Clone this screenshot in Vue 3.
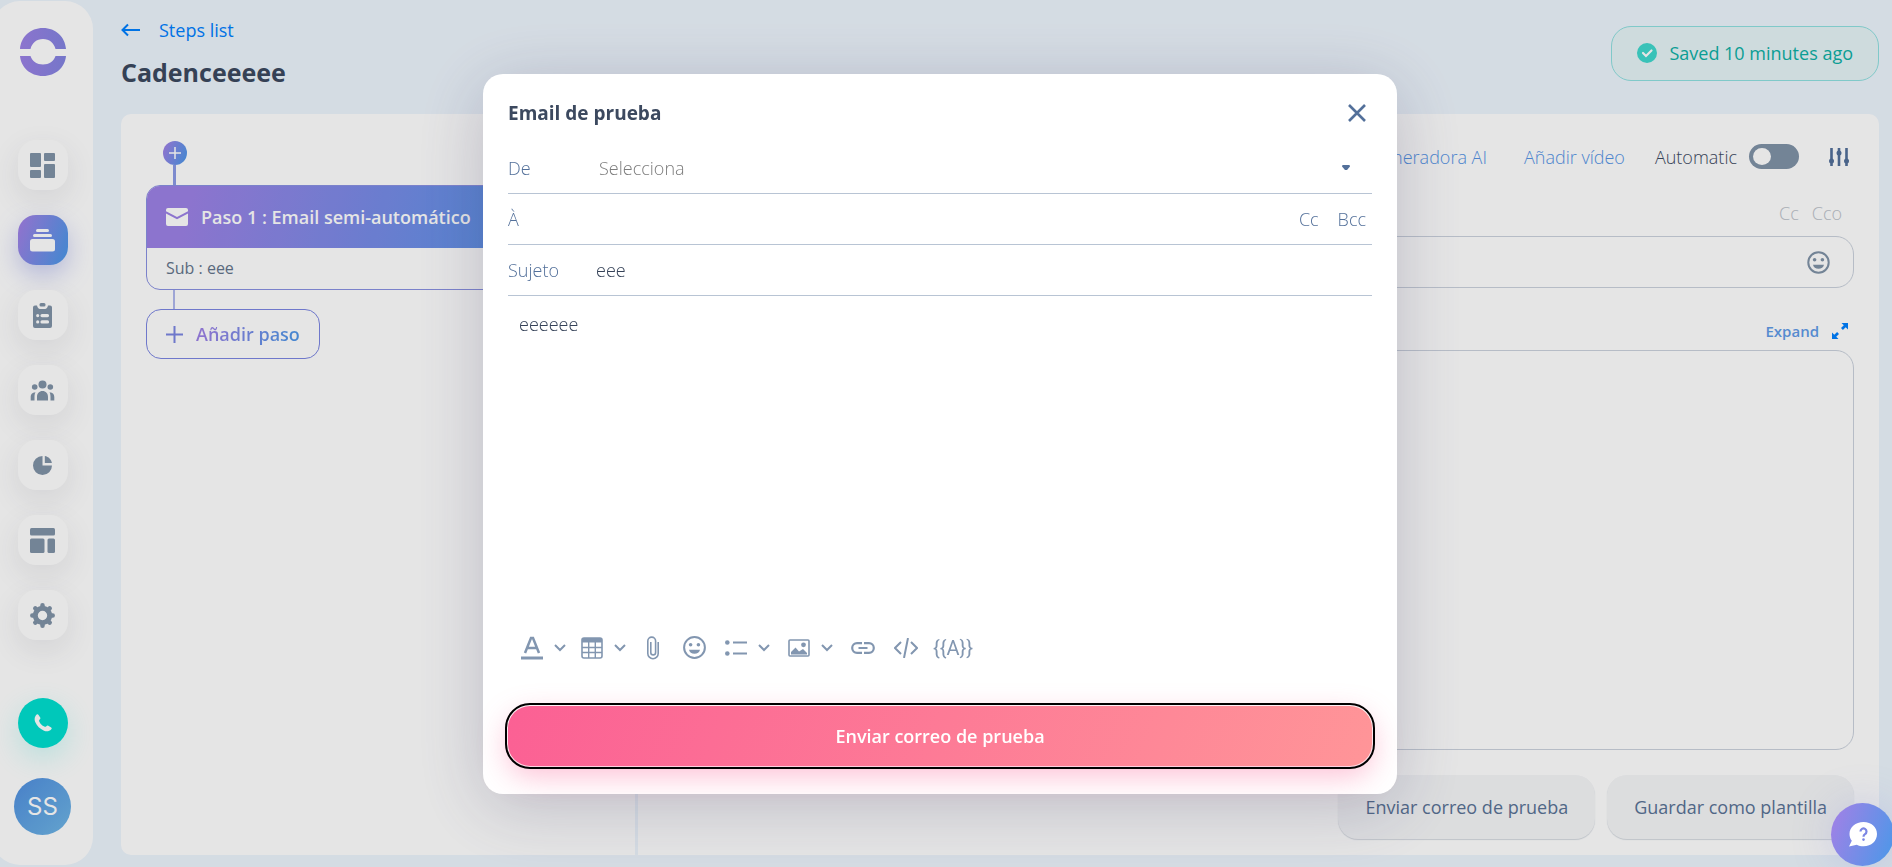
<script setup>
import { ref } from 'vue'

// --- ESTADO ---
const automatico = ref(false)
const remitente = ref('')
const destinatario = ref('')
const asunto = ref('eee')
const mensaje = ref('eeeeee')
const asuntoPaso = ref('')
const cuerpoPaso = ref('')
const mostrarModal = ref(true)
</script>

<template>
  <div class="page">
    <!-- BARRA LATERAL -->
    <aside class="sidebar">
      <svg class="logo" width="46" height="48" viewBox="0 0 46 48">
        <defs>
          <linearGradient id="grad-logo" x1="0" x2="1">
            <stop offset="0" stop-color="#9c82e6" />
            <stop offset="1" stop-color="#8384e0" />
          </linearGradient>
        </defs>
        <path fill="url(#grad-logo)" d="M0 21C1 9 10 0 23 0s22 9 23 21H35.500C34 15 29.500 11 23 11s-11 4-12.500 10zM0 28h10.500C12 33 17 36.500 23 36.500S34 33 35.500 28H46C45 39 36 48 23 48S1 39 0 28z" />
      </svg>

      <nav class="nav">
        <button class="nav-btn" aria-label="Panel">
          <svg width="25" height="25" viewBox="0 0 25 25">
            <rect width="11" height="14" rx="1" /><rect y="17" width="11" height="8" rx="1" />
            <rect x="14" width="11" height="8" rx="1" /><rect x="14" y="11" width="11" height="14" rx="1" />
          </svg>
        </button>
        <button class="nav-btn active" aria-label="Cadencias">
          <svg width="25" height="25" viewBox="0 0 25 25">
            <rect x="6" y="1" width="13" height="3" rx="1.500" /><rect x="3" y="6" width="19" height="3" rx="1.500" />
            <rect y="11" width="25" height="12.500" rx="2.500" />
          </svg>
        </button>
        <button class="nav-btn" aria-label="Tareas">
          <svg width="25" height="25" viewBox="0 0 25 25">
            <path fill-rule="evenodd" d="M5 2.500h2c.5 2 1.500 3.500 3 3.500h5c1.500 0 2.500-1.500 3-3.500h2a2 2 0 0 1 2 2V23a2 2 0 0 1-2 2H5a2 2 0 0 1-2-2V4.500a2 2 0 0 1 2-2zM7.700 11a1.600 1.600 0 1 0 0 3.200 1.600 1.600 0 0 0 0-3.200zm4.300 0a1.600 1.600 0 0 0 0 3.200h5.500a1.600 1.600 0 0 0 0-3.200zm-4.300 6.300a1.600 1.600 0 1 0 0 3.200 1.600 1.600 0 0 0 0-3.200zm4.300 0a1.600 1.600 0 0 0 0 3.200h5.500a1.600 1.600 0 0 0 0-3.200z" />
            <rect x="9.500" y="0" width="6" height="3.600" rx="1.500" />
          </svg>
        </button>
        <button class="nav-btn" aria-label="Contactos">
          <svg width="25" height="25" viewBox="0 0 25 25">
            <circle cx="12.500" cy="6.500" r="4" /><circle cx="4.700" cy="9" r="2.800" /><circle cx="20.300" cy="9" r="2.800" />
            <path d="M7 22.500v-3.500c0-3.500 2.200-6 5.500-6s5.500 2.500 5.500 6v3.500zM.7 22.500V19c0-2.500 1.300-4.600 4.800-4.800C4.700 15.500 4.500 17 4.500 19v3.500zM24.300 22.500V19c0-2.500-1.300-4.600-4.800-4.800.8 1.300 1 2.800 1 4.800v3.500z" />
          </svg>
        </button>
        <button class="nav-btn" aria-label="Informes">
          <svg width="25" height="25" viewBox="0 0 25 25">
            <path d="M12.500 3v9.500H22A9.500 9.500 0 1 1 12.500 3z" /><path d="M14.800 3c3.800.7 6.500 3.400 7.100 7.100h-7.100z" />
          </svg>
        </button>
        <button class="nav-btn" aria-label="Plantillas">
          <svg width="25" height="25" viewBox="0 0 25 25">
            <rect width="25" height="7.500" rx="1.500" /><rect y="10.500" width="14.500" height="14.500" rx="1.500" />
            <rect x="17.500" y="10.500" width="7.500" height="14.500" rx="1.500" />
          </svg>
        </button>
        <button class="nav-btn" aria-label="Ajustes">
          <svg width="25" height="25" viewBox="0 0 25 25">
            <circle cx="12.500" cy="12.500" r="7.200" fill="none" stroke="#8193a8" stroke-width="5" />
            <path fill="none" stroke="#8193a8" stroke-width="4.500" stroke-linecap="round" d="M12.500 2.300v1.500M12.500 21.200v1.500M2.300 12.500h1.500M21.200 12.500h1.500M5.300 5.300l.8.8M18.900 18.900l.8.8M19.700 5.300l-.8.8M6.100 18.900l-.8.8" />
          </svg>
        </button>
      </nav>

      <button class="phone" aria-label="Llamar">
        <svg width="18" height="18" viewBox="0 0 18 18">
          <path fill="#fff" d="M2.700.6c.6-.7 1.300-.5 1.700.1L6.200 3.600c.4.700.2 1.200-.3 1.700-.9.800-1 1.400-.6 2.300 1 2.400 2.700 4.100 5 5 .9.400 1.500.3 2.300-.6.500-.5 1-.7 1.700-.3l2.900 1.800c.7.500.7 1.100.1 1.700-2 2.200-4.600 2.700-7.300 1.500C5.800 14.800 3 12 1.200 8 .1 5.200.6 2.600 2.700.6z" />
        </svg>
      </button>
      <button class="avatar">SS</button>
    </aside>

    <!-- CONTENIDO PRINCIPAL -->
    <main class="main">
      <header class="header">
        <div>
          <a class="back" href="#">
            <svg width="20" height="14" viewBox="0 0 20 14" fill="none" stroke="currentColor" stroke-width="2">
              <path d="M19 7H2M7 1.500L1.500 7 7 12.500" />
            </svg>
            Steps list
          </a>
          <h1>Cadenceeeee</h1>
        </div>
        <div class="saved">
          <svg width="20" height="20" viewBox="0 0 20 20">
            <circle cx="10" cy="10" r="10" fill="#40d8cd" />
            <path d="M6 10l3 3 5.500-5.500" fill="none" stroke="#fff" stroke-width="2.200" stroke-linecap="round" />
          </svg>
          Saved 10 minutes ago
        </div>
      </header>

      <div class="panel">
        <!-- Lista de pasos -->
        <section class="steps">
          <button class="insert" aria-label="Insertar paso">
            <svg width="12" height="12" viewBox="0 0 12 12"><path d="M6 0v12M0 6h12" stroke="#fff" stroke-width="1.500" /></svg>
          </button>
          <div class="line"></div>
          <article class="step">
            <h2>
              <svg width="22" height="18" viewBox="0 0 22 18" fill="#fff">
                <path d="M2 0h18a2 2 0 0 1 2 2v1.300L11 9 0 3.300V2a2 2 0 0 1 2-2z" />
                <path d="M0 5.500l11 5.700 11-5.700V16a2 2 0 0 1-2 2H2a2 2 0 0 1-2-2z" />
              </svg>
              Paso 1 : Email semi-automático
            </h2>
            <p>Sub : eee</p>
          </article>
          <div class="line thin"></div>
          <button class="add-step">
            <svg width="17" height="17" viewBox="0 0 17 17"><path d="M8.500 0v17M0 8.500h17" stroke="#7c86e2" stroke-width="2" /></svg>
            <span>Añadir paso</span>
          </button>
        </section>

        <!-- Editor del paso -->
        <section class="editor">
          <div class="options">
            <a class="ai" href="#">Generadora AI</a>
            <a href="#">Añadir vídeo</a>
            <label class="auto">
              Automatic
              <input v-model="automatico" type="checkbox" />
            </label>
            <button class="plain" aria-label="Opciones">
              <svg width="20" height="18" viewBox="0 0 20 18" fill="#53709a">
                <path d="M1.200 0h2.600v18H1.200zM8.700 0h2.600v18H8.700zM16.200 0h2.600v18h-2.600z" />
                <circle cx="2.500" cy="13" r="2.500" /><circle cx="10" cy="5" r="2.500" /><circle cx="17.500" cy="13" r="2.500" />
              </svg>
            </button>
          </div>
          <div class="copies">
            <button class="plain">Cc</button>
            <button class="plain">Cco</button>
          </div>
          <div class="subject-box">
            <input v-model="asuntoPaso" type="text" aria-label="Asunto" />
            <button class="plain" aria-label="Emoji">
              <svg width="23" height="23" viewBox="0 0 23 23" fill="#8193a8">
                <circle cx="11.500" cy="11.500" r="10.200" fill="none" stroke="#8193a8" stroke-width="2" />
                <circle cx="7.600" cy="8.700" r="1.800" /><circle cx="15.400" cy="8.700" r="1.800" />
                <path d="M6 13.800h11c-.5 2.500-2.600 4-5.500 4s-5-1.500-5.500-4z" />
              </svg>
            </button>
          </div>
          <button class="plain expand">
            Expand
            <svg width="16" height="16" viewBox="0 0 16 16" fill="#0080ff">
              <path d="M9.500 0H16v6.500l-2.300-2.300-2.800 2.800-1.900-1.900 2.800-2.800zM6.500 16H0V9.500l2.300 2.300 2.800-2.800 1.900 1.900-2.800 2.800z" />
            </svg>
          </button>
          <textarea v-model="cuerpoPaso" class="body-box" aria-label="Mensaje del paso"></textarea>
          <div class="actions">
            <button @click="mostrarModal = true">Enviar correo de prueba</button>
            <button>Guardar como plantilla</button>
          </div>
        </section>
      </div>
    </main>

    <!-- MODAL -->
    <div v-if="mostrarModal" class="overlay">
      <form class="modal" @submit.prevent>
        <header class="modal-head">
          <h2>Email de prueba</h2>
          <button type="button" class="plain" aria-label="Cerrar" @click="mostrarModal = false">
            <svg width="18" height="18" viewBox="0 0 18 18"><path d="M1 1l16 16M17 1L1 17" stroke="#53709a" stroke-width="2.600" /></svg>
          </button>
        </header>

        <div class="field">
          <label for="de">De</label>
          <select id="de" v-model="remitente">
            <option value="">Selecciona</option>
          </select>
          <svg class="caret" width="8" height="5" viewBox="0 0 8 5"><path d="M.5 0h7l.5 1.500L5 5H3L0 1.500z" fill="#53709a" /></svg>
        </div>
        <div class="field">
          <label for="para">À</label>
          <input id="para" v-model="destinatario" type="text" />
          <button type="button" class="plain">Cc</button>
          <button type="button" class="plain">Bcc</button>
        </div>
        <div class="field">
          <label for="sujeto">Sujeto</label>
          <input id="sujeto" v-model="asunto" type="text" />
        </div>

        <textarea v-model="mensaje" class="message" aria-label="Mensaje"></textarea>

        <!-- Herramientas de formato -->
        <div class="tools">
          <button type="button" class="plain with-arrow" aria-label="Texto">
            <svg width="22" height="24" viewBox="0 0 22 24">
              <path d="M4 17L10 2h2l6 15M6.500 12h9" fill="none" stroke="currentColor" stroke-width="2.500" />
              <path d="M0 20.500h22v3H0z" />
            </svg>
            <svg width="12" height="8" viewBox="0 0 12 8"><path d="M1 1l5 5 5-5" fill="none" stroke="currentColor" stroke-width="2" /></svg>
          </button>
          <button type="button" class="plain with-arrow" aria-label="Tabla">
            <svg width="22" height="22" viewBox="0 0 22 22">
              <rect x="1" y="1" width="20" height="20" rx="2" fill="none" stroke="currentColor" stroke-width="1.600" />
              <path d="M1 1h20v4.500H1z" />
              <path d="M1 10.500h20M1 15.500h20M7.700 5v16M14.300 5v16" stroke="currentColor" stroke-width="1.400" />
            </svg>
            <svg width="12" height="8" viewBox="0 0 12 8"><path d="M1 1l5 5 5-5" fill="none" stroke="currentColor" stroke-width="2" /></svg>
          </button>
          <button type="button" class="plain clip" aria-label="Adjuntar">
            <svg width="14" height="24" viewBox="0 0 14 24">
              <path d="M12.200 6v11.500a5.200 5.200 0 0 1-10.400 0V5a3.900 3.900 0 0 1 7.800 0v11.500a2.400 2.400 0 0 1-4.800 0V6" fill="none" stroke="currentColor" stroke-width="1.600" />
            </svg>
          </button>
          <button type="button" class="plain emoji" aria-label="Emoji">
            <svg width="23" height="23" viewBox="0 0 23 23">
              <circle cx="11.500" cy="11.500" r="10.400" fill="none" stroke="currentColor" stroke-width="2" />
              <circle cx="7.600" cy="8.700" r="1.800" /><circle cx="15.400" cy="8.700" r="1.800" />
              <path d="M6 13.800h11c-.5 2.500-2.600 4-5.500 4s-5-1.500-5.500-4z" />
            </svg>
          </button>
          <button type="button" class="plain with-arrow" aria-label="Lista">
            <svg width="22" height="16" viewBox="0 0 22 16">
              <circle cx="2.300" cy="2.500" r="2.300" /><circle cx="2.300" cy="13.500" r="2.300" />
              <path d="M8 2.500h14M8 13.500h14" stroke="currentColor" stroke-width="2" />
            </svg>
            <svg width="12" height="8" viewBox="0 0 12 8"><path d="M1 1l5 5 5-5" fill="none" stroke="currentColor" stroke-width="2" /></svg>
          </button>
          <button type="button" class="plain with-arrow image" aria-label="Imagen">
            <svg width="22" height="18" viewBox="0 0 22 18">
              <rect x="1" y="1" width="20" height="16" rx="1" fill="none" stroke="currentColor" stroke-width="1.600" />
              <circle cx="15.500" cy="5.800" r="2.400" />
              <path d="M3 15.500v-2.500l4.500-4.500 3.500 4 4-2.500 4 4v1.500z" />
            </svg>
            <svg width="12" height="8" viewBox="0 0 12 8"><path d="M1 1l5 5 5-5" fill="none" stroke="currentColor" stroke-width="2" /></svg>
          </button>
          <button type="button" class="plain link" aria-label="Enlace">
            <svg width="24" height="12" viewBox="0 0 24 12" fill="none" stroke="currentColor" stroke-width="2.200">
              <path d="M11 1.200H6a4.800 4.800 0 0 0 0 9.600h5M13 1.200h5a4.800 4.800 0 0 1 0 9.600h-5M7.500 6h9" />
            </svg>
          </button>
          <button type="button" class="plain" aria-label="Código">
            <svg width="24" height="20" viewBox="0 0 24 20" fill="none" stroke="currentColor" stroke-width="2">
              <path d="M7 4l-6 6 6 6M17 4l6 6-6 6M14 0l-4 20" />
            </svg>
          </button>
          <button type="button" class="plain variable">{{ '{' + '{A}' + '}' }}</button>
        </div>

        <button type="submit" class="send">Enviar correo de prueba</button>
      </form>
    </div>

    <button class="chat" aria-label="Ayuda">
      <svg width="30" height="26" viewBox="0 0 30 26">
        <path fill="#fff" d="M15.500 0C23.500 0 29 5.200 29 12s-5.500 12.300-13.500 12.300c-2.500 0-4.700-.6-6.700-1.600L1 24.500l2.800-5.800C2.200 16.800 1.500 14.500 1.500 12 1.500 5.200 7.500 0 15.500 0z" />
        <path d="M12.500 9.500a3 3 0 1 1 4.500 2.600c-1.300.8-1.500 1.300-1.500 2.700" fill="none" stroke="#7b86e4" stroke-width="2.200" />
        <circle cx="15.500" cy="17.600" r="1.300" fill="#7b86e4" />
      </svg>
    </button>
  </div>
</template>

<style>
body {
  margin: 0;
  background: #edf5fd;
}
</style>

<style scoped>
.page {
  display: flex;
  min-height: 100vh;
  overflow: hidden;
  box-sizing: border-box;
  font-family: 'Open Sans', 'Noto Sans', sans-serif;
  font-size: 18px;
  line-height: 24px;
  color: #3c495f;
}

h1, h2, p { margin: 0; }
svg { display: block; flex-shrink: 0; }
button, input, select, textarea { font: inherit; color: inherit; }
button { cursor: pointer; border: 0; padding: 0; }
a { text-decoration: none; }
.plain { background: none; }

/* BARRA LATERAL */
.sidebar {
  display: flex;
  flex-direction: column;
  align-items: center;
  flex-shrink: 0;
  box-sizing: border-box;
  width: 101px;
  margin: 1px 0 2px -8px;
  padding: 27px 0 30px;
  background: #fff;
  border-radius: 28px;
}
.nav {
  display: flex;
  flex-direction: column;
  gap: 25px;
  margin: 64px 0 auto;
}
.nav-btn, .phone, .avatar, .insert, .chat {
  display: flex;
  align-items: center;
  justify-content: center;
}
.nav-btn {
  width: 50px;
  height: 50px;
  border-radius: 18px;
  background: #fff;
  fill: #8193a8;
  box-shadow: 0 10px 30px rgba(60, 60, 80, 0.1);
}
.nav-btn.active {
  fill: #fff;
  background: linear-gradient(110deg, #9c82e6 10%, #5296e8 90%);
  box-shadow: 0 10px 25px rgba(124, 134, 226, 0.4);
}
.phone {
  width: 50px;
  height: 50px;
  border-radius: 50%;
  background: #00dfd0;
  box-shadow: 0 10px 30px rgba(0, 223, 208, 0.2);
}
.avatar {
  width: 57px;
  height: 57px;
  margin-top: 30px;
  border-radius: 50%;
  color: #fff;
  font-family: Inter, sans-serif;
  font-size: 24px;
  background: linear-gradient(135deg, #508fdf, #6fb6e6);
}

/* CABECERA */
.main {
  flex: 1;
  display: flex;
  flex-direction: column;
  min-width: 0;
  padding: 18px 13px 12px 28px;
}
.header {
  display: flex;
  justify-content: space-between;
  margin-bottom: 26px;
}
.back {
  display: flex;
  align-items: center;
  gap: 18px;
  color: #0080ff;
}
h1 {
  margin-top: 14px;
  font-size: 25px;
  line-height: 32px;
  font-weight: 700;
}
.saved {
  display: flex;
  align-items: center;
  align-self: flex-start;
  gap: 12px;
  margin-top: 8px;
  padding: 14px 25px 15px;
  border: 1px solid #8fe0e0;
  border-radius: 20px;
  background: #e6f4f7;
  color: #0db0a5;
  font-weight: 500;
}

/* PANEL */
.panel {
  flex: 1;
  display: grid;
  grid-template-columns: 5fr 12fr;
  background: #fff;
  border-radius: 10px;
}
.steps {
  display: flex;
  flex-direction: column;
  align-items: flex-start;
  min-width: 0;
  padding: 27px 25px;
  border-right: 3px solid #edf5fd;
}
.insert {
  width: 24px;
  height: 24px;
  margin-left: 17px;
  border-radius: 50%;
  background: linear-gradient(110deg, #9c82e6 10%, #5296e8 90%);
}
.line {
  width: 3px;
  height: 20px;
  margin-left: 27px;
  background: #8c9be6;
}
.line.thin {
  width: 2px;
  height: 19px;
  background: #b0b8ee;
}
.step {
  align-self: stretch;
  overflow: hidden;
  border: 1px solid #8a91e2;
  border-radius: 14px;
}
.step h2 {
  display: flex;
  align-items: center;
  gap: 13px;
  padding: 19px;
  color: #fff;
  font-size: 18px;
  line-height: 24px;
  font-weight: 550;
  background: linear-gradient(105deg, #9c82e6 10%, #5296e8 90%);
}
.step p {
  padding: 8px 19px 9px;
  font-size: 16px;
  color: #65758c;
}
.add-step {
  display: flex;
  align-items: center;
  gap: 13px;
  padding: 12px 19px;
  border: 1px solid #7c86e2;
  border-radius: 15px;
  background: none;
  font-weight: 650;
}
.add-step span {
  color: transparent;
  background: linear-gradient(110deg, #9c82e6 10%, #5296e8 90%);
  background-clip: text;
}

/* EDITOR DEL PASO */
.editor {
  display: flex;
  flex-direction: column;
  min-width: 0;
  padding: 30px 25px 16px;
}
.options {
  display: flex;
  align-items: center;
  justify-content: flex-end;
  gap: 30px;
  padding-right: 5px;
  font-weight: 350;
}
.options a { color: #5594e6; }
.options .ai { margin-right: 7px; }
.auto {
  display: flex;
  align-items: center;
  gap: 12px;
}
.auto input {
  appearance: none;
  box-sizing: border-box;
  width: 50px;
  height: 25px;
  margin: 0;
  padding: 4px;
  border-radius: 13px;
  background: #8193a8;
}
.auto input::before {
  content: '';
  display: block;
  width: 18px;
  height: 17px;
  border-radius: 50%;
  background: #fff;
}
.auto input:checked::before { margin-left: auto; }
.copies {
  display: flex;
  justify-content: flex-end;
  gap: 13px;
  margin: 32px 12px 11px;
  color: #bcc2ca;
  font-weight: 350;
}
.subject-box {
  display: flex;
  align-items: center;
  padding: 0 23px;
  height: 50px;
  border: 1px solid #cbd2dd;
  border-radius: 18px;
}
.subject-box input {
  flex: 1;
  border: 0;
  outline: 0;
  background: none;
}
.expand {
  display: flex;
  align-items: center;
  align-self: flex-end;
  gap: 13px;
  margin: 31px 6px 7px 0;
  color: #5f9be8;
  font-size: 15px;
  font-weight: 600;
}
.body-box {
  flex: 1;
  min-height: 200px;
  padding: 20px;
  border: 1px solid #cbd2dd;
  border-radius: 18px;
  background: none;
  resize: none;
}
.actions {
  display: flex;
  justify-content: flex-end;
  gap: 12px;
  margin-top: 25px;
}
.actions button {
  padding: 20px 27px;
  border-radius: 20px;
  background: #f5f6f8;
  box-shadow: 0 1px 1px #d5dae0;
  color: #5a7396;
  font-weight: 500;
}

/* MODAL */
.overlay {
  position: fixed;
  inset: 0;
  display: flex;
  align-items: center;
  justify-content: center;
  padding-right: 12px;
  background: rgba(0, 0, 0, 0.1);
}
.modal {
  display: flex;
  flex-direction: column;
  box-sizing: border-box;
  width: 90%;
  max-width: 914px;
  padding: 25px 25px 28px;
  border-radius: 20px;
  background: #fff;
  box-shadow: 0 12px 70px rgba(60, 55, 95, 0.24);
}
.modal-head {
  display: flex;
  align-items: center;
  justify-content: space-between;
  padding: 2px 6px 18px 0;
}
.modal-head h2 {
  font-size: 19px;
  line-height: 24px;
  font-weight: 700;
}
.field {
  display: flex;
  align-items: center;
  height: 50px;
  border-bottom: 1px solid #b8c4d4;
  color: #53709a;
  font-weight: 350;
}
.field label { width: 88px; }
.field input, .field select {
  flex: 1;
  min-width: 0;
  padding: 0;
  border: 0;
  outline: 0;
  background: none;
  color: #354258;
}
.field select {
  appearance: none;
  padding-left: 3px;
  color: #7c7c7c;
}
.field .caret { margin-right: 22px; }
.field .plain { margin-right: 6px; margin-left: 13px; }
.message {
  height: 300px;
  margin: 16px 0 21px;
  padding: 0 11px;
  border: 0;
  outline: 0;
  resize: none;
  color: #354258;
  font-weight: 350;
}
.tools {
  display: flex;
  align-items: center;
  gap: 15px;
  height: 30px;
  padding-left: 13px;
  color: #8296b0;
  fill: currentColor;
}
.tools .clip { margin: 0 8px 0 5px; }
.tools .emoji { margin-right: 4px; }
.tools .image { margin: 0 3px; }
.tools .link { margin-right: 4px; }
.tools .variable {
  font-family: Roboto, sans-serif;
  font-size: 20px;
}
.with-arrow {
  display: flex;
  align-items: center;
  gap: 11px;
}
.send {
  height: 60px;
  margin-top: 43px;
  border-radius: 22px;
  outline: 2px solid #000;
  outline-offset: 1px;
  color: #fff;
  font-weight: 550;
  background: linear-gradient(110deg, #fb6094, #ff9598);
  box-shadow: 0 10px 30px rgba(251, 96, 148, 0.4);
}

/* AYUDA */
.chat {
  position: fixed;
  right: -2px;
  bottom: 1px;
  width: 63px;
  height: 63px;
  border-radius: 50%;
  background: linear-gradient(110deg, #9c82e6 10%, #5296e8 90%);
  box-shadow: 0 0 40px rgba(124, 134, 226, 0.25);
}
</style>
